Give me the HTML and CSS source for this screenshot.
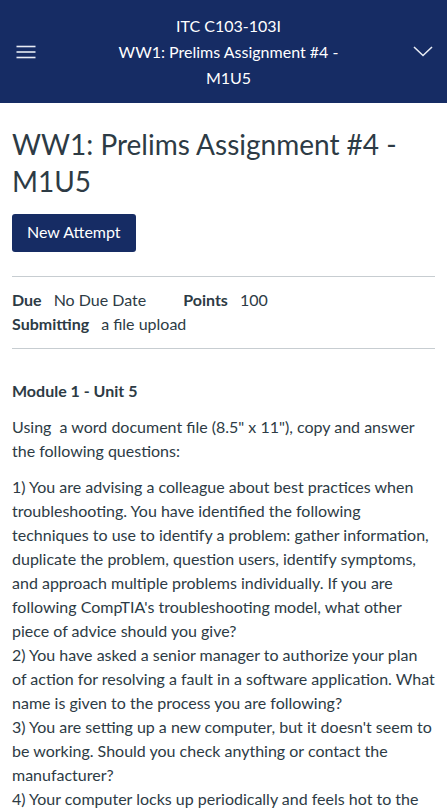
FILE: index.html
```html
<!DOCTYPE html>
<html lang="en">
<head>
<meta charset="utf-8">
<title>WW1: Prelims Assignment #4 - M1U5</title>
<link rel="stylesheet" href="styles.css">
</head>
<body>
<header class="topbar">
  <button class="icon-btn" aria-label="Menu">
    <svg width="20" height="14" viewBox="0 0 20 14"><g stroke="#e8ecf4" stroke-width="1.6"><line x1="0.5" y1="1.5" x2="19.5" y2="1.5"/><line x1="0.5" y1="7" x2="19.5" y2="7"/><line x1="0.5" y1="12.5" x2="19.5" y2="12.5"/></g></svg>
  </button>
  <div class="topbar-title">
    <div>ITC C103-103I</div>
    <div>WW1: Prelims Assignment #4 - M1U5</div>
  </div>
  <button class="icon-btn" aria-label="Open">
    <svg width="20" height="11" viewBox="0 0 20 11"><polyline points="1,1 10,9.5 19,1" fill="none" stroke="#e8ecf4" stroke-width="1.6"/></svg>
  </button>
</header>
<main class="content">
  <h1 class="title">WW1: Prelims Assignment #4 - M1U5</h1>
  <button class="btn-primary">New Attempt</button>
  <div class="details">
    <div class="details-row">
      <span class="item"><b>Due</b><span>No Due Date</span></span>
      <span class="item"><b>Points</b><span>100</span></span>
    </div>
    <div class="details-row">
      <span class="item"><b>Submitting</b><span>a file upload</span></span>
    </div>
  </div>
  <div class="description">
    <p><strong>Module 1 - Unit 5</strong></p>
    <p>Using&nbsp; a word document file (8.5" x 11"), copy and answer the following questions:</p>
    <p>1) You are advising a colleague about best practices when troubleshooting. You have identified the following techniques to use to identify a problem: gather information, duplicate the problem, question users, identify symptoms, and approach multiple problems individually. If you are following CompTIA's troubleshooting model, what other piece of advice should you give?<br>2) You have asked a senior manager to authorize your plan of action for resolving a fault in a software application. What name is given to the process you are following?<br>3) You are setting up a new computer, but it doesn't seem to be working. Should you check anything or contact the manufacturer?<br>4) Your computer locks up periodically and feels hot to the touch. Could these symptoms be related?</p>
  </div>
</main>
</body>
</html>
```
FILE: styles.css
```css
html, body {
  margin: 0;
  padding: 0;
  background: #ffffff;
}
body {
  font-family: Lato, "Open Sans", sans-serif;
  color: #2d3b45;
  font-size: 16px;
  line-height: 24px;
}
.topbar {
  background: #162c64;
  color: #ffffff;
  height: 103px;
  display: flex;
  align-items: center;
  justify-content: space-between;
  padding: 0 12px 0 14px;
  box-sizing: border-box;
}
.icon-btn {
  background: none;
  border: 0;
  padding: 0;
  width: 24px;
  height: 24px;
  display: flex;
  align-items: center;
  justify-content: center;
}
.topbar-title {
  flex: 1;
  text-align: center;
  font-size: 16px;
  line-height: 26px;
  padding: 0 62px 0 70px;
}
.content {
  padding: 0 12px;
}
.title {
  font-size: 28px;
  line-height: 37px;
  font-weight: 400;
  margin: 23px 0 14px;
}
.btn-primary {
  font-family: inherit;
  font-size: 16px;
  color: #ffffff;
  background: #162c64;
  border: 0;
  border-radius: 3px;
  height: 38px;
  padding: 0 15px 3px;
}
.details {
  margin-top: 24px;
  border-top: 1px solid #c7cdd1;
  border-bottom: 1px solid #c7cdd1;
  padding: 11px 0 12px;
}
.details-row {
  display: flex;
  gap: 37px;
}
.item {
  display: flex;
  gap: 12px;
}
.item b {
  font-weight: 700;
}
.description {
  padding-top: 18px;
}
.description p {
  margin: 12px 0;
}
```
